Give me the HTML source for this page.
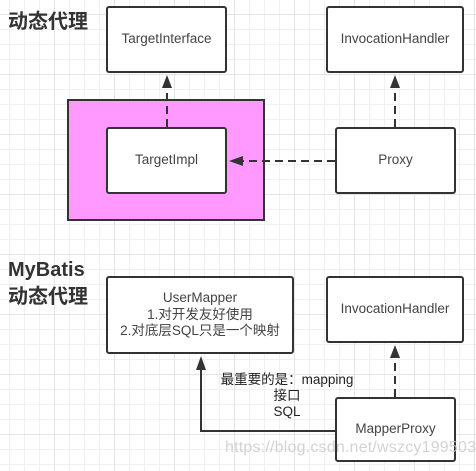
<!DOCTYPE html>
<html><head><meta charset="utf-8"><style>
body{margin:0;width:476px;height:471px;overflow:hidden;background:#fff;
background-image:
linear-gradient(90deg,#e4e4e4 1px,transparent 1px),
linear-gradient(#e4e4e4 1px,transparent 1px),
linear-gradient(90deg,#f0f0f0 1px,transparent 1px),
linear-gradient(#f0f0f0 1px,transparent 1px);
background-size:60px 60px,60px 60px,15px 15px,15px 15px;
background-position:54px 0,0 14px,9px 0,0 14px;
font-family:"Liberation Sans","Noto Sans CJK SC",sans-serif;position:relative}
.b{position:absolute;box-sizing:border-box;border:2px solid #333;border-radius:3px;background:#fff;
display:flex;align-items:center;justify-content:center;text-align:center;font-size:13.5px;color:#444;line-height:16.5px}
.t{position:absolute;font-weight:bold;font-size:20px;color:#333;line-height:27px}
svg{position:absolute;left:0;top:0}
</style></head><body>
<div class="t" style="left:8px;top:9px">动态代理</div>
<div class="t" style="left:8px;top:257px">MyBatis<br>动态代理</div>
<div style="position:absolute;left:67px;top:99px;width:198px;height:122px;box-sizing:border-box;border:2px solid #333;background:#ff99ff"></div>
<div class="b" style="left:106px;top:6px;width:121px;height:67px">TargetInterface</div>
<div class="b" style="left:326px;top:6px;width:138px;height:67px">InvocationHandler</div>
<div class="b" style="left:106px;top:127px;width:121px;height:67px">TargetImpl</div>
<div class="b" style="left:335px;top:127px;width:121px;height:67px">Proxy</div>
<div class="b" style="left:106px;top:276px;width:188px;height:78px">UserMapper<br>1.对开发友好使用<br>2.对底层SQL只是一个映射</div>
<div class="b" style="left:326px;top:276px;width:138px;height:67px">InvocationHandler</div>
<div class="b" style="left:335px;top:397px;width:121px;height:65px">MapperProxy</div>
<svg width="476" height="471">
<g stroke="#333" stroke-width="2" fill="none">
<path d="M167 127V88" stroke-dasharray="8 5"/>
<path d="M395 127V88" stroke-dasharray="8 5"/>
<path d="M335 161H243" stroke-dasharray="8 5"/>
<path d="M395 397V358" stroke-dasharray="8 5"/>
<path d="M335 431H201V370"/>
</g>
<g fill="#333">
<path d="M162 88L167 75L172 88Z"/>
<path d="M390 88L395 75L400 88Z"/>
<path d="M243 156L229 161L243 166Z"/>
<path d="M390 358L395 345L400 358Z"/>
<path d="M196 370L201 356L206 370Z"/>
</g>
</svg>
<div style="position:absolute;left:205px;top:372px;width:164px;text-align:center;font-size:13.5px;line-height:16px;color:#222">最重要的是：mapping<br>接口<br>SQL</div>
<div style="position:absolute;left:225px;top:439px;font-size:16px;letter-spacing:0.2px;color:rgba(200,200,200,0.8)">https://blog.csdn.net/wszcy199503</div>
</body></html>
